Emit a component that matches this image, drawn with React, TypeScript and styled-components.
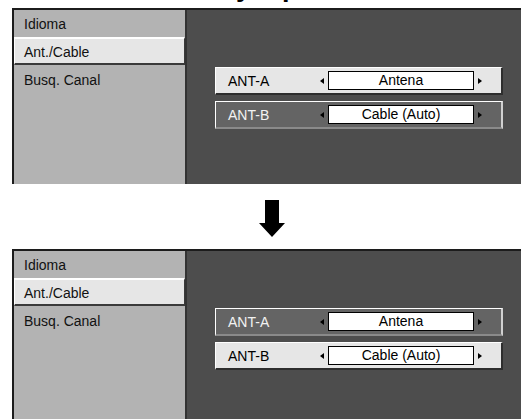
import styled, { createGlobalStyle } from 'styled-components'

const GlobalStyle = createGlobalStyle`
  html, body {
    margin: 0;
    padding: 0;
    background: #fff;
    overflow: hidden;
  }
  body {
    font-family: "Liberation Sans", Arial, Helvetica, sans-serif;
    width: 521px;
    height: 419px;
  }
`

interface ISetting {
  label: string
  value: string
}

const settings: ISetting[] = [
  { label: 'ANT-A', value: 'Antena' },
  { label: 'ANT-B', value: 'Cable (Auto)' },
]

const menu = ['Idioma', 'Ant./Cable', 'Busq. Canal']

interface IMenuScreen {
  active: number
}

const MenuScreen = ({ active }: IMenuScreen) => {
  return <Screen>
    <Sidebar>
      {menu.map((m) =>
        <MenuItem key={m} $selected={m === 'Ant./Cable'}>{m}</MenuItem>
      )}
    </Sidebar>
    <Content>
      {settings.map(({ label, value }, i) =>
        <SettingRow key={label} $active={i === active}>
          <span className="label">{label}</span>
          <Tri $dir="left" />
          <ValueBox>{value}</ValueBox>
          <Tri $dir="right" />
        </SettingRow>
      )}
    </Content>
  </Screen>
}

const App = () => {
  return <Page>
    <GlobalStyle />
    <Caption>Antena/Cable y Tipo</Caption>
    <MenuScreen active={1} />
    <ArrowWrap>
      <svg width="26" height="38" viewBox="0 0 26 38">
        <path d="M6 0 H20 V23 H26 L13 37 L0 23 H6 Z" fill="#000" />
      </svg>
    </ArrowWrap>
    <MenuScreen active={0} />
  </Page>
}

const Page = styled.div`
  display: flex;
  flex-direction: column;
  width: 521px;
  overflow: hidden;
`

/* title of the page above, almost entirely scrolled out of view */
const Caption = styled.div`
  margin-top: -28px;
  height: 30px;
  line-height: 30px;
  padding-left: 56px;
  font-size: 27px;
  font-weight: bold;
  color: #000;
  white-space: nowrap;
  margin-bottom: 6px;
`

const Screen = styled.div`
  margin-left: 12px;
  width: 540px;
  height: 176px;
  flex-shrink: 0;
  display: flex;
  border-top: 2px solid #1c1c1c;
  border-left: 2px solid #1c1c1c;
  box-sizing: border-box;
  background: #4d4d4d;
`

const Sidebar = styled.div`
  width: 171px;
  flex-shrink: 0;
  background: #b3b3b3;
  border-right: 2px solid #333;
  display: flex;
  flex-direction: column;
`

const MenuItem = styled.div<{ $selected?: boolean }>`
  height: 28px;
  line-height: 30px;
  padding-left: 10px;
  font-size: 14px;
  color: #111;
  box-sizing: border-box;
  ${({ $selected }) => $selected && `
    background: #e6e6e6;
    border-top: 2px solid #fff;
    border-left: 1px solid #fff;
    border-bottom: 2px solid #3a3a3a;
    border-right: 1px solid #3a3a3a;
    padding-left: 9px;
    line-height: 26px;
  `}
  &:first-child {
    height: 27px;
    line-height: 28px;
  }
`

const Content = styled.div`
  flex: 1;
  padding: 57px 0 0 28px;
  display: flex;
  flex-direction: column;
  gap: 6px;
`

const SettingRow = styled.div<{ $active?: boolean }>`
  width: 288px;
  height: 28px;
  box-sizing: border-box;
  display: flex;
  align-items: center;
  padding-left: 12px;
  font-size: 14px;
  background: ${({ $active }) => ($active ? '#646464' : '#e6e6e6')};
  color: ${({ $active }) => ($active ? '#f2f2f2' : '#000')};
  border-top: 1px solid #fff;
  border-left: 1px solid #fff;
  border-bottom: 2px solid ${({ $active }) => ($active ? '#8a8a8a' : '#2e2e2e')};
  border-right: 2px solid ${({ $active }) => ($active ? '#d0d0d0' : '#2e2e2e')};
  .label {
    width: 92px;
  }
`

const Tri = styled.span<{ $dir: 'left' | 'right' }>`
  width: 0;
  height: 0;
  border-top: 3.5px solid transparent;
  border-bottom: 3.5px solid transparent;
  ${({ $dir }) => ($dir === 'left'
    ? 'border-right: 4px solid #000; margin-right: 4px;'
    : 'border-left: 4px solid #000; margin-left: 4px;')}
`

const ValueBox = styled.div`
  width: 146px;
  height: 19px;
  box-sizing: border-box;
  border: 1px solid #000;
  background: #fff;
  color: #000;
  text-align: center;
  line-height: 17px;
  font-size: 14px;
`

const ArrowWrap = styled.div`
  height: 65px;
  flex-shrink: 0;
  display: flex;
  justify-content: center;
  padding: 16px 0 0 22px;
  box-sizing: border-box;
  svg {
    display: block;
  }
`

export default App
